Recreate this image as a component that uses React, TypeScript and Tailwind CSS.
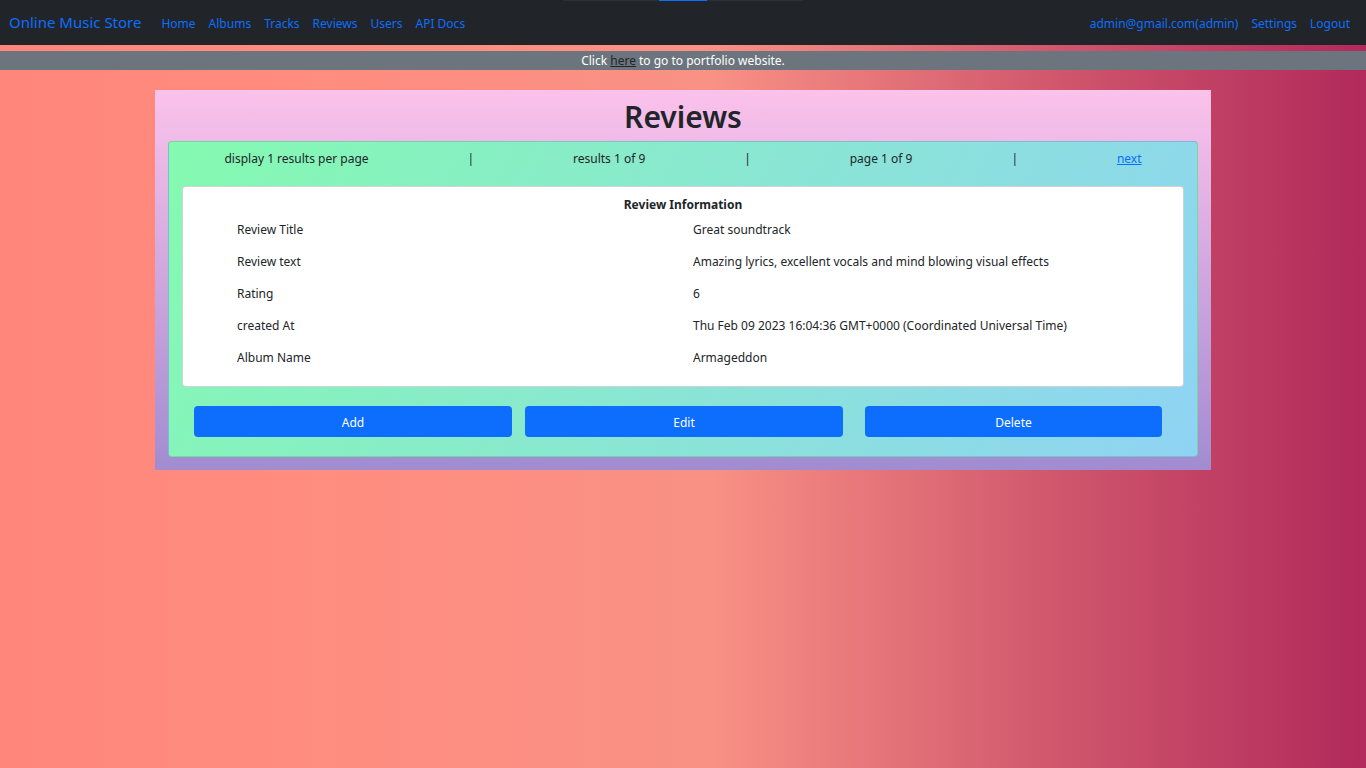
import React from "react";

const rows: [string, string][] = [
  ["Review Title", "Great soundtrack"],
  ["Review text", "Amazing lyrics, excellent vocals and mind blowing visual effects"],
  ["Rating", "6"],
  ["created At", "Thu Feb 09 2023 16:04:36 GMT+0000 (Coordinated Universal Time)"],
  ["Album Name", "Armageddon"],
];

export default function App() {
  return (
    <div
      className="min-h-[768px] w-full text-[#212529] text-[12px] leading-[1.5]"
      style={{
        fontFamily: '"Noto Sans", "Open Sans", sans-serif',
      }}
    >
      <div className="min-h-[768px] w-full bg-[linear-gradient(to_right,#ff8177_0%,#ff867a_0%,#ff8c7f_21%,#f99185_52%,#cf556c_78%,#b12a5b_100%)] pb-10">
        {/* navbar */}
        <nav className="relative h-[45px] bg-[#212529] flex items-center px-[9px]">
          <div className="absolute top-0 left-[563px] w-[240px] h-px bg-[#2c3036]" />
          <div className="absolute top-0 left-[659px] w-[48px] h-px bg-[#0d6efd]" />
          <a className="text-[#0d6efd] text-[15px] mr-[20px] leading-none">Online Music Store</a>
          <div className="flex items-center gap-[13px] text-[#0d6efd] pt-[2px]">
            <a>Home</a>
            <a>Albums</a>
            <a>Tracks</a>
            <a>Reviews</a>
            <a>Users</a>
            <a>API Docs</a>
          </div>
          <div className="ml-auto flex items-center gap-[13px] text-[#0d6efd] pr-[7px] pt-[2px]">
            <a>admin@gmail.com(admin)</a>
            <a>Settings</a>
            <a>Logout</a>
          </div>
        </nav>

        {/* portfolio bar */}
        <div className="mt-[6px] h-[19px] bg-[#6c757d] text-white flex items-center justify-center leading-none pt-[1px]">
          <span>
            Click <a className="underline text-[#212529]">here</a> to go to portfolio website.
          </span>
        </div>

        {/* main container */}
        <div className="mx-auto mt-[20px] w-[1056px] bg-[linear-gradient(to_top,#a18cd1_0%,#fbc2eb_100%)] px-[13px] pb-[13px] pt-[9px]">
          <h1 className="text-center text-[30px] font-semibold leading-[1.2] mb-[6px]">Reviews</h1>

          <div className="rounded-[4px] border border-black/[0.12] bg-[linear-gradient(120deg,#84fab0_0%,#8fd3f4_100%)] pb-[19px]">
            <div className="flex justify-around items-center h-[33px] pt-[1px] px-[6px]">
              <span>display 1 results per page</span>
              <span>|</span>
              <span>results 1 of 9</span>
              <span>|</span>
              <span>page 1 of 9</span>
              <span>|</span>
              <a className="text-[#0d6efd] underline">next</a>
            </div>

            <div className="mx-[13px] mt-[11px] rounded-[4px] border border-black/[0.175] bg-white pt-[8px] pb-[12px]">
              <div className="text-center font-bold leading-[19px]">Review Information</div>
              <div className="grid grid-cols-[456px_1fr] pl-[54px]">
                {rows.map(([k, v]) => (
                  <React.Fragment key={k}>
                    <div className="h-[32px] flex items-center">{k}</div>
                    <div className="h-[32px] flex items-center">{v}</div>
                  </React.Fragment>
                ))}
              </div>
            </div>

            <div className="mt-[19px] flex pl-[25px]">
              <button className="w-[318px] h-[31px] pt-[2px] rounded-[4px] bg-[#0d6efd] text-white">Add</button>
              <button className="ml-[13px] w-[318px] h-[31px] pt-[2px] rounded-[4px] bg-[#0d6efd] text-white">Edit</button>
              <button className="ml-[22px] w-[297px] h-[31px] pt-[2px] rounded-[4px] bg-[#0d6efd] text-white">Delete</button>
            </div>
          </div>
        </div>
      </div>
    </div>
  );
}
